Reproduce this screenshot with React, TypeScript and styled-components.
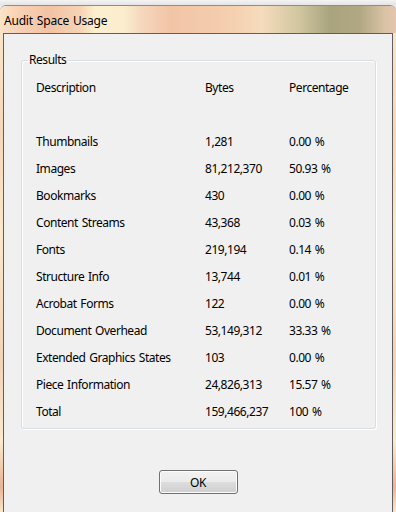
import React from "react";
import styled, { createGlobalStyle } from "styled-components";

const GlobalStyle = createGlobalStyle`
  html, body {
    margin: 0;
    padding: 0;
    background: #ececec;
  }
  body {
    font-family: "Noto Sans", "Liberation Sans", sans-serif;
    font-size: 12px;
    letter-spacing: -0.45px;
    word-spacing: 1px;
    color: #000;
  }
`;

interface Row {
  label: string;
  bytes: string;
  pct: string;
}

const rows: Array<Row> = [
  { label: "Thumbnails", bytes: "1,281", pct: "0.00 %" },
  { label: "Images", bytes: "81,212,370", pct: "50.93 %" },
  { label: "Bookmarks", bytes: "430", pct: "0.00 %" },
  { label: "Content Streams", bytes: "43,368", pct: "0.03 %" },
  { label: "Fonts", bytes: "219,194", pct: "0.14 %" },
  { label: "Structure Info", bytes: "13,744", pct: "0.01 %" },
  { label: "Acrobat Forms", bytes: "122", pct: "0.00 %" },
  { label: "Document Overhead", bytes: "53,149,312", pct: "33.33 %" },
  { label: "Extended Graphics States", bytes: "103", pct: "0.00 %" },
  { label: "Piece Information", bytes: "24,826,313", pct: "15.57 %" },
  { label: "Total", bytes: "159,466,237", pct: "100 %" },
];

const Desktop = styled.div`
  display: flex;
  flex-direction: column;
  width: 396px;
  height: 512px;
  overflow: hidden;
`;

const BehindStrip = styled.div`
  height: 5px;
  flex: none;
  background: linear-gradient(180deg, #f4f4f4, #e4e4e4);
`;

const Window = styled.div`
  flex: 1;
  display: flex;
  flex-direction: column;
  border-top: 1px solid #8d8d8d;
  border-radius: 6px 6px 0 0;
  background: linear-gradient(
    180deg,
    #fbe9cc 0%,
    #f6d6b6 25%,
    #fbe8c8 45%,
    #f3d2b5 70%,
    #fbeacc 86%,
    #eab394 95%,
    #fae6c8 100%
  );
  overflow: hidden;
`;

const TitleBar = styled.div`
  height: 27px;
  display: flex;
  align-items: center;
  padding: 1px 0 0 4px;
  box-sizing: border-box;
  background: linear-gradient(
    90deg,
    #fbe4c6 0px,
    #f7d0b4 20px,
    #f2c3a5 50px,
    #f6d3b5 80px,
    #fcefcf 95px,
    #fbeccd 125px,
    #f5d9bf 140px,
    #f2c4a6 170px,
    #f4cfb0 230px,
    #f5dcbc 262px,
    #cfc59f 300px,
    #a9a47e 330px,
    #b1a883 360px,
    #d9c3a5 385px,
    #e6c5ae 396px
  );
`;

const Title = styled.span`
  font-size: 12px;
  letter-spacing: -0.2px;
  color: #000;
`;

const Panel = styled.div`
  flex: 1;
  margin: 0 3px;
  background: #f0f0f0;
  border: 1px solid #5e5e5e;
  border-bottom: none;
  display: flex;
  flex-direction: column;
  align-items: flex-start;
`;

const Group = styled.fieldset`
  margin: 18px 0 0 17px;
  width: 355px;
  box-sizing: border-box;
  padding: 0 6px 3px 6px;
  border: 1px solid #d5dfe5;
  border-radius: 3px;
  box-shadow: inset 1px 1px 0 #ffffff, 1px 1px 0 #ffffff;
`;

const Legend = styled.legend`
  padding: 0 1px;
  line-height: 16px;
`;

const Table = styled.div`
  display: grid;
  grid-template-columns: 169px 84px 1fr;
  grid-auto-rows: 27px;
  margin: 6px 0 0 8px;
  align-items: center;
`;

const Cell = styled.div`
  white-space: nowrap;
  line-height: 16px;
`;

const Spacer = styled.div`
  grid-column: 1 / -1;
`;

const Footer = styled.div`
  align-self: stretch;
  display: flex;
  justify-content: center;
  padding-top: 41px;
`;

const Button = styled.button`
  width: 79px;
  height: 24px;
  box-sizing: border-box;
  border: 1px solid #707070;
  border-radius: 3px;
  font-family: inherit;
  font-size: 12px;
  letter-spacing: inherit;
  color: #000;
  padding: 0;
  background: linear-gradient(180deg, #f2f2f2 0%, #ebebeb 50%, #dddddd 50%, #cfcfcf 100%);
  box-shadow: inset 0 0 0 1px #fcfcfc;
`;

export default function App() {
  return (
    <>
      <GlobalStyle />
      <Desktop>
        <BehindStrip />
        <Window>
          <TitleBar>
            <Title>Audit Space Usage</Title>
          </TitleBar>
          <Panel>
            <Group>
              <Legend>Results</Legend>
              <Table>
                <Cell>Description</Cell>
                <Cell>Bytes</Cell>
                <Cell>Percentage</Cell>
                <Spacer />
                {rows.map((r) => (
                  <React.Fragment key={r.label}>
                    <Cell>{r.label}</Cell>
                    <Cell>{r.bytes}</Cell>
                    <Cell>{r.pct}</Cell>
                  </React.Fragment>
                ))}
              </Table>
            </Group>
            <Footer>
              <Button type="button">OK</Button>
            </Footer>
          </Panel>
        </Window>
      </Desktop>
    </>
  );
}
